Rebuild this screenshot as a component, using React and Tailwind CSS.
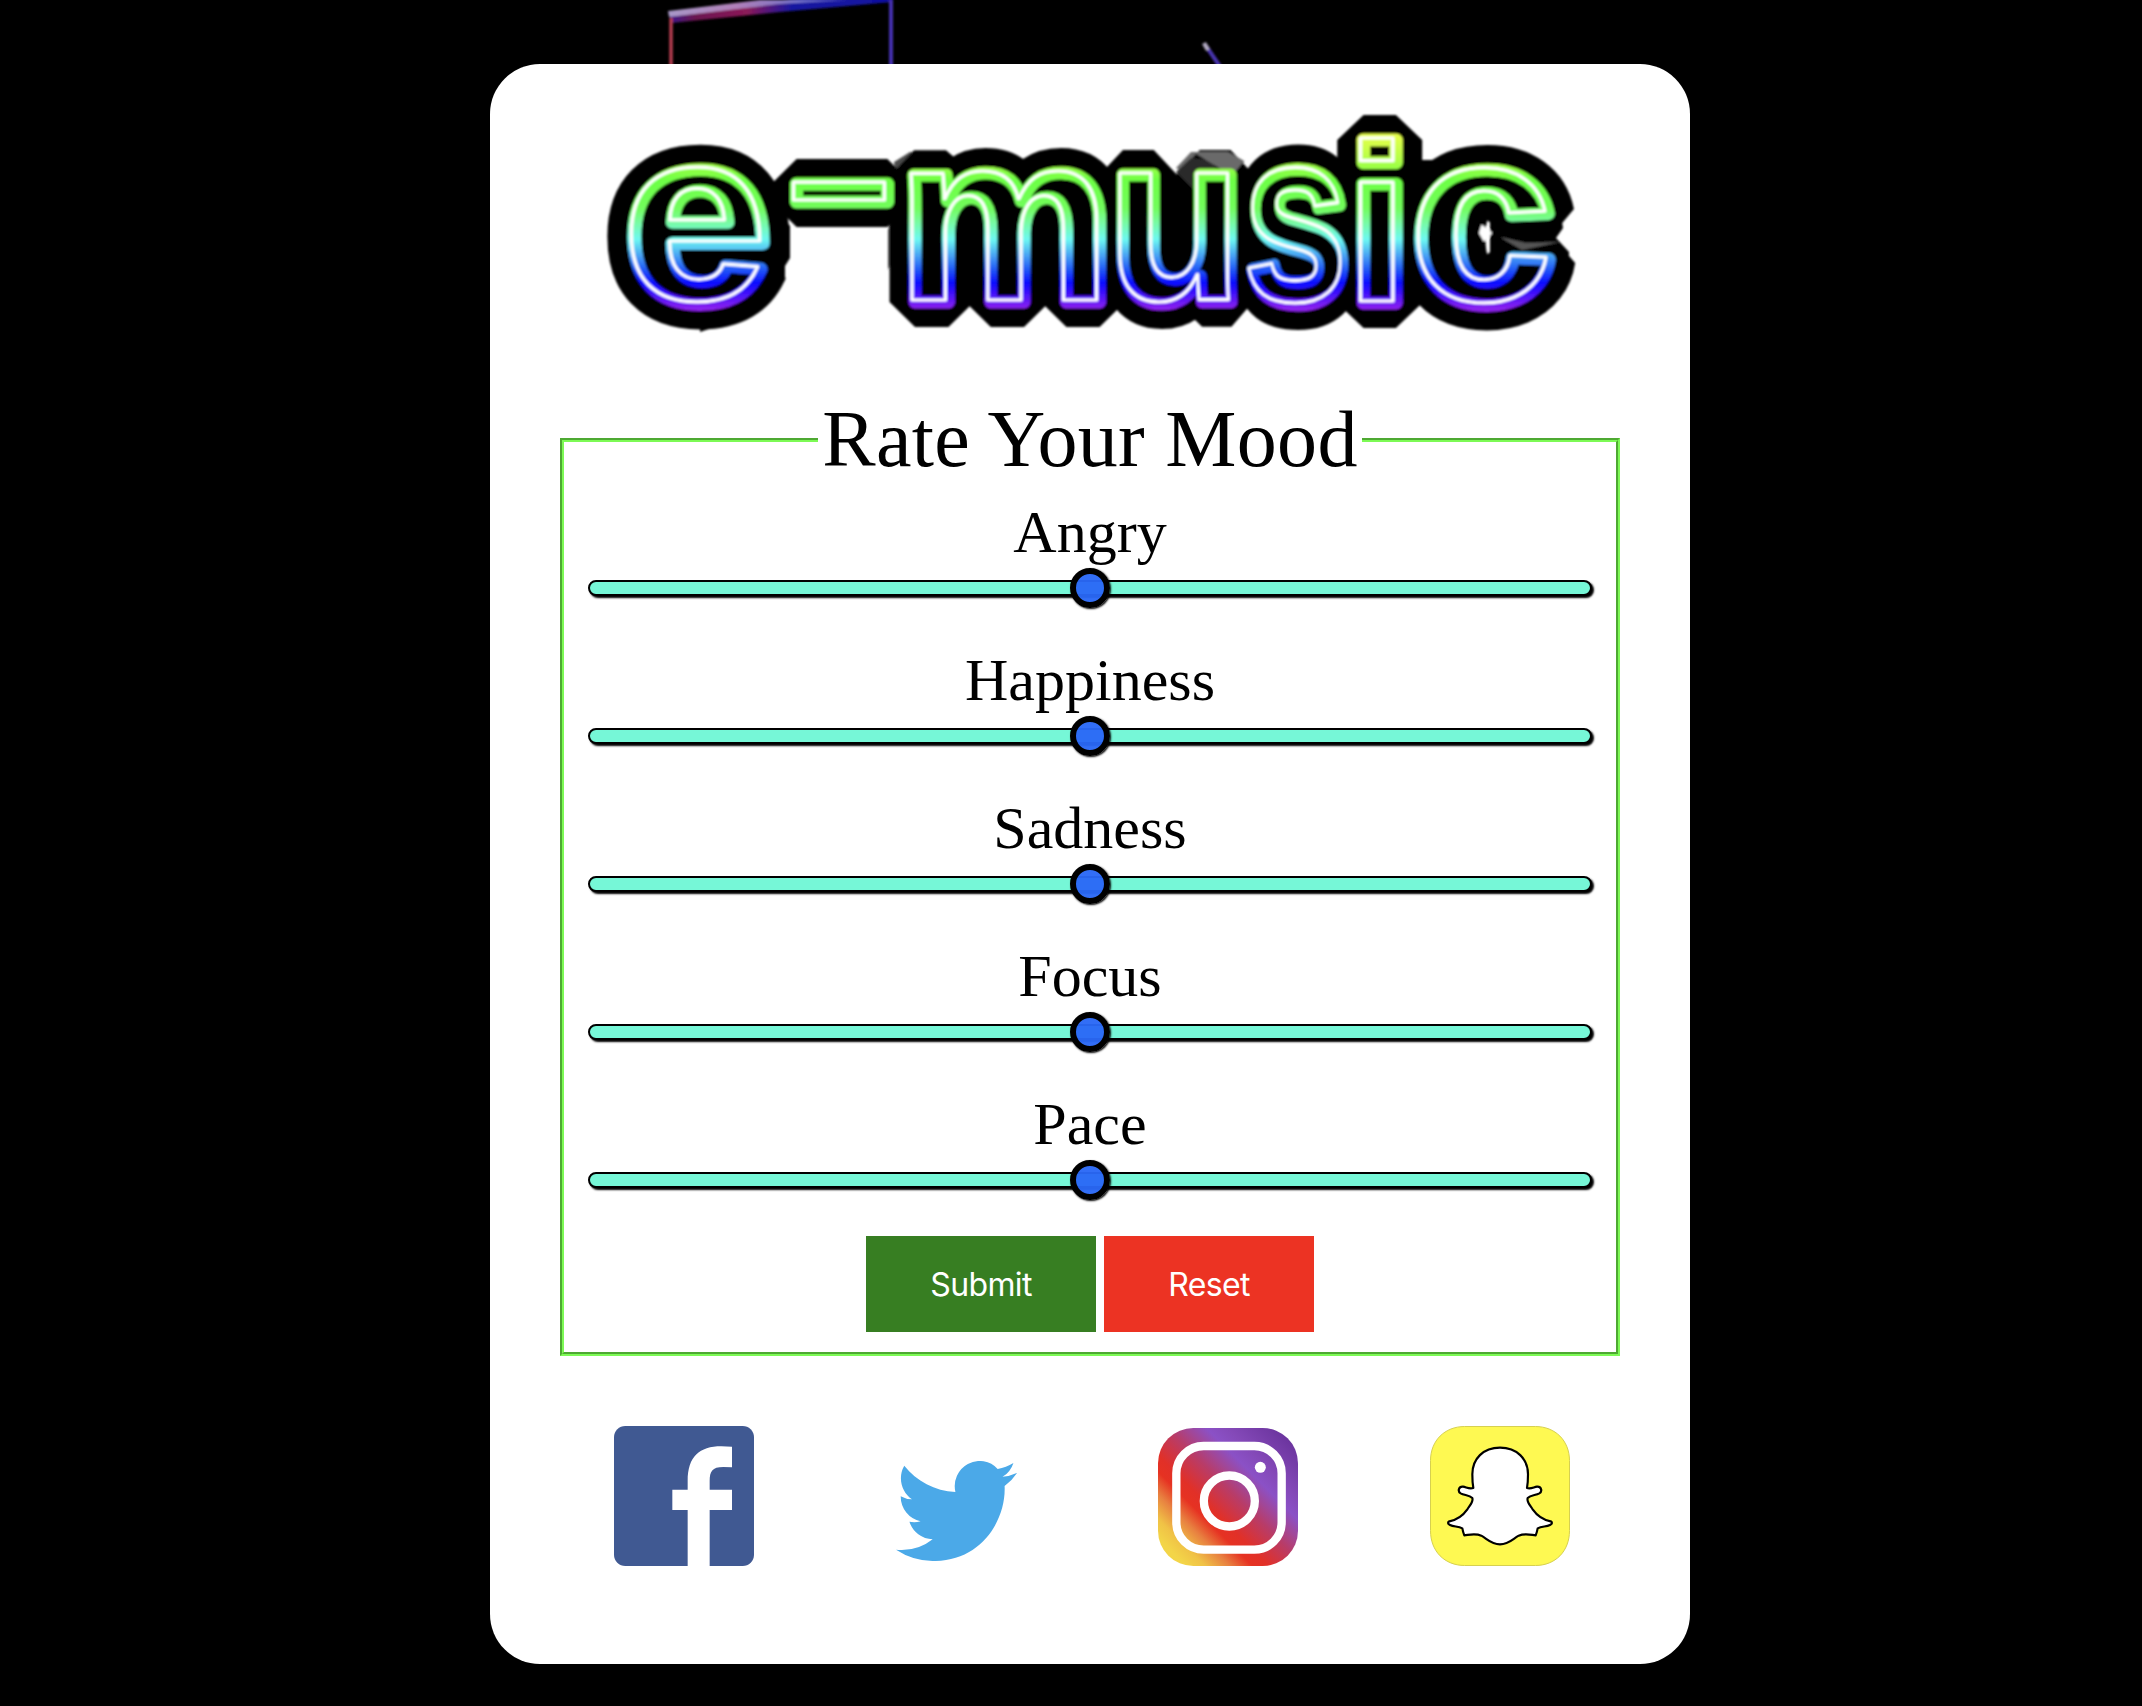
const MOODS = ['Angry', 'Happiness', 'Sadness', 'Focus', 'Pace'];

// x = origin of the glyph, y = baseline shift, sx = horizontal stretch, size = font size
const LETTERS = [
  { ch: 'e', x: 64, y: 1, sx: 1.08, size: 246 },
  { ch: '–', x: 231, y: -60, sx: 1.02, size: 180 },
  { ch: 'm', x: 338, y: 1, sx: 1.02, size: 239 },
  { ch: 'u', x: 549, y: 1, sx: 0.94, size: 239 },
  { ch: 's', x: 685, y: 2, sx: 0.775, size: 246 },
  { ch: 'i', x: 787, y: 2, sx: 1.05, size: 225 },
  { ch: 'c', x: 851, y: 2, sx: 1.06, size: 247 },
];

function Logo() {
  return (
    <svg className="block h-[260px] w-[1060px] shrink-0" viewBox="0 0 1060 260" role="img" aria-label="e-music">
      <defs>
        <linearGradient id="rainbow" gradientUnits="userSpaceOnUse" x1="0" y1="-166" x2="0" y2="8">
          <stop offset="0" stopColor="#e6ff4a" />
          <stop offset="0.14" stopColor="#b4ff46" />
          <stop offset="0.26" stopColor="#6dff45" />
          <stop offset="0.42" stopColor="#72fd5c" />
          <stop offset="0.5" stopColor="#78fba0" />
          <stop offset="0.6" stopColor="#6df8f2" />
          <stop offset="0.7" stopColor="#459cf4" />
          <stop offset="0.77" stopColor="#235cf6" />
          <stop offset="0.85" stopColor="#0a0cff" />
          <stop offset="0.92" stopColor="#4a12fa" />
          <stop offset="1" stopColor="#8d22ee" />
        </linearGradient>
        <filter id="soft" x="-5%" y="-10%" width="110%" height="120%">
          <feGaussianBlur stdDeviation="0.9" />
        </filter>
      </defs>
      <g filter="url(#soft)">
        <path d="M334 62L350 52H384L364 90L328 170V130L338 100Z" fill="#4a4a4a" />
        <path d="M616 68L631 52H668L684 61L676 100Z" fill="#6b6b6b" />
        <path d="M150 70L190 80L230 126V158L225 166V180L190 215L140 232Z" fill="#000" />
        <path d="M930 110H1000L1003 128L996 138L1009 152L1008 180L975 215L930 180Z" fill="#000" />
        <path d="M780 60H900V180H780Z" fill="#000" />
        <use href="#word" stroke="#000" strokeWidth="50" strokeLinejoin="bevel" fill="#000" />
        <path d="M616 72L631 58L652 60L660 78L640 96Z" fill="#2c2c2c" />
        <path d="M633 52H668L684 61L672 76L656 66Z" fill="#6b6b6b" />
        <g stroke="url(#rainbow)" strokeWidth="13" strokeLinejoin="round" fill="#000">
          <g id="word" fontFamily="'Liberation Sans', Arial, sans-serif" fontWeight="700">
            {LETTERS.map((l) => (
              <text key={l.ch} y={l.y} transform={`translate(${l.x} 201) scale(${l.sx} 1)`} fontSize={l.size}>
                {l.ch}
              </text>
            ))}
          </g>
        </g>
        <use href="#word" x="-3" y="-2.500" stroke="#fff" strokeWidth="3.200" strokeLinejoin="round" fill="none" />
        <path d="M940 137L966 143L1000 142L962 150Z" fill="#555" />
        <path d="M922 126L931 133L924 140L920 133Z" fill="#fff" stroke="#fff" strokeWidth="2" strokeLinejoin="round" />
      </g>
    </svg>
  );
}

function Slider({ label }) {
  return (
    <div className="flex flex-col items-center">
      <span className="h-[68px] text-[60px] leading-[68px]">{label}</span>
      <div className="mt-3.5 flex h-4 w-[1004px] items-center justify-center rounded-full border-2 border-black bg-[#76f7d7] shadow-[2px_2px_2px_#000]">
        <div className="size-10 shrink-0 rounded-full border-6 border-black bg-[#2a68f6]/96 shadow-[1px_1px_2px_#000]" />
      </div>
    </div>
  );
}

function Facebook() {
  return (
    <svg className="size-[140px]" viewBox="0 0 420 420" aria-label="Facebook">
      <rect width="420" height="420" rx="34" fill="#405992" />
      <path
        d="M175 191H221V165C221 92 256 61 322 61Q340 61 354 62V124L328 123C294 123 287 137 287 165V191H354V252H287V420H221V252H175Z"
        fill="#fff"
      />
    </svg>
  );
}

function Twitter() {
  return (
    <svg className="mt-[35px] ml-[142px] h-[100px] w-[121px]" viewBox="0 2.25 24 19.5" preserveAspectRatio="none" aria-label="Twitter">
      <path
        fill="#4ba9e8"
        d="M23.953 4.57a10 10 0 01-2.825.775 4.958 4.958 0 002.163-2.723c-.951.555-2.005.959-3.127 1.184a4.92 4.92 0 00-8.384 4.482C7.69 8.095 4.067 6.13 1.64 3.162a4.822 4.822 0 00-.666 2.475c0 1.71.87 3.213 2.188 4.096a4.904 4.904 0 01-2.228-.616v.06a4.923 4.923 0 003.946 4.827 4.996 4.996 0 01-2.212.085 4.936 4.936 0 004.604 3.417 9.867 9.867 0 01-6.102 2.105c-.39 0-.779-.023-1.17-.067a13.995 13.995 0 007.557 2.209c9.053 0 13.998-7.496 13.998-13.985 0-.21 0-.42-.015-.63A9.935 9.935 0 0024 4.59z"
      />
    </svg>
  );
}

function Instagram() {
  return (
    <svg className="mt-0.5 ml-[141px] h-[138px] w-[140px]" viewBox="0 0 420 414" aria-label="Instagram">
      <defs>
        <linearGradient id="insta" gradientUnits="userSpaceOnUse" x1="0" y1="414" x2="417" y2="-3">
          <stop offset="0.1" stopColor="#f3d548" />
          <stop offset="0.17" stopColor="#f0c246" />
          <stop offset="0.26" stopColor="#e88040" />
          <stop offset="0.34" stopColor="#e63222" />
          <stop offset="0.4" stopColor="#e13028" />
          <stop offset="0.53" stopColor="#b83c68" />
          <stop offset="0.67" stopColor="#8b51c6" />
          <stop offset="0.75" stopColor="#8449b8" />
          <stop offset="0.92" stopColor="#6c359f" />
        </linearGradient>
      </defs>
      <rect width="420" height="414" rx="106" fill="url(#insta)" />
      <rect x="55" y="54" width="316" height="311" rx="82" fill="none" stroke="#fff" strokeWidth="25" />
      <circle cx="214" cy="219" r="76.5" fill="none" stroke="#fff" strokeWidth="25" />
      <circle cx="307" cy="118" r="16.5" fill="#fff" />
    </svg>
  );
}

function Snapchat() {
  return (
    <svg className="ml-[132px] size-[140px]" viewBox="0 0 420 420" aria-label="Snapchat">
      <path
        d="M104 1.5H316C376 1.5 418.500 44 418.500 104V314C418.500 376 376 418.500 316 418.500H104C44 418.500 1.500 376 1.500 314V104C1.500 44 44 1.500 104 1.500Z"
        fill="#fef952"
        stroke="#d6d050"
        strokeWidth="3"
      />
      <path
        d="M210 65C160 65 127 98 127 145Q127 170 130 186C118 190 110 184 99 182C86 181 82 196 92 202C103 208 118 207 127 216C131 227 120 238 112 250C98 270 78 282 58 286C52 289 54 294 60 297C72 303 84 300 97 307Q99 318 103 328C120 326 136 321 154 329C172 339 184 355 210 355C236 355 248 339 266 329C284 321 300 326 317 328Q321 318 323 307C336 300 348 303 360 297C366 294 368 289 362 286C342 282 322 270 308 250C300 238 289 227 293 216C302 207 317 208 328 202C338 196 334 181 321 182C310 184 302 190 291 186Q294 170 294 145C294 98 260 65 210 65Z"
        fill="#fff"
        stroke="#000"
        strokeWidth="6.500"
        strokeLinejoin="round"
      />
    </svg>
  );
}

function Backdrop() {
  return (
    <svg className="absolute top-0 left-0 h-16 w-[1400px]" viewBox="0 0 1400 64" aria-hidden="true">
      <defs>
        <linearGradient id="beam" x1="668" x2="893" y1="0" y2="0" gradientUnits="userSpaceOnUse">
          <stop offset="0" stopColor="#3a1a90" />
          <stop offset="0.12" stopColor="#6a1550" />
          <stop offset="0.35" stopColor="#8c1a58" />
          <stop offset="0.55" stopColor="#1818a0" />
          <stop offset="1" stopColor="#1010a0" />
        </linearGradient>
        <linearGradient id="edge" x1="668" x2="893" y1="0" y2="0" gradientUnits="userSpaceOnUse">
          <stop offset="0" stopColor="#a898c8" />
          <stop offset="0.3" stopColor="#b080b8" />
          <stop offset="0.6" stopColor="#7070c8" />
          <stop offset="1" stopColor="#1a1ab0" />
        </linearGradient>
        <filter id="haze" x="-5%" y="-50%" width="110%" height="200%">
          <feGaussianBlur stdDeviation="1.2" />
        </filter>
      </defs>
      <g filter="url(#haze)">
        <path d="M669 13L800 -2H893V2L780 12L671 23Z" fill="url(#beam)" />
        <path d="M668 11L760 0H850L780 4L669 17Z" fill="url(#edge)" />
        <path d="M671 18V70" stroke="#b83c50" strokeWidth="3.500" />
        <path d="M891 0V70" stroke="#4430b0" strokeWidth="4" />
        <path d="M1206 46L1221 68" stroke="#4a34b0" strokeWidth="4" />
        <path d="M1204 43L1208 50" stroke="#b0a8c0" strokeWidth="4.500" />
      </g>
    </svg>
  );
}

export default function App() {
  return (
    <div className="relative h-[1706px] w-[2142px] overflow-hidden bg-black pt-16">
      <Backdrop />
      <main className="relative ml-[490px] flex h-[1600px] w-[1200px] flex-col rounded-[50px] bg-white px-[70px] pt-9 font-['Liberation_Serif',serif] text-black">
        <Logo />
        <form className="mt-[78px] h-[918px] shrink-0 border-2 border-t-[#4ea932] border-r-[#7dfa55] border-b-[#7dfa55] border-l-[#4ea932]">
          <div className="flex h-full flex-col items-center border-2 border-t-[#7dfa55] border-r-[#4ea932] border-b-[#4ea932] border-l-[#7dfa55]">
            <h1 className="-mt-[49px] h-[92px] w-[544px] shrink-0 bg-white text-center text-[80px] leading-[92px] tracking-[0.3px] whitespace-nowrap">
              Rate Your Mood
            </h1>
            <div className="mt-[13px] flex flex-col gap-[50px]">
              {MOODS.map((m) => (
                <Slider key={m} label={m} />
              ))}
            </div>
            <div className="mt-12 flex gap-2 font-['Inter',sans-serif] text-[32px] tracking-[-0.02em] text-white">
              <button type="button" className="h-24 w-[230px] bg-[#377e22] pt-px">Submit</button>
              <button type="button" className="h-24 w-[210px] bg-[#ec3323] pt-px">Reset</button>
            </div>
          </div>
        </form>
        <div className="mt-[70px] flex items-start pl-[54px]">
          <Facebook />
          <Twitter />
          <Instagram />
          <Snapchat />
        </div>
      </main>
    </div>
  );
}
